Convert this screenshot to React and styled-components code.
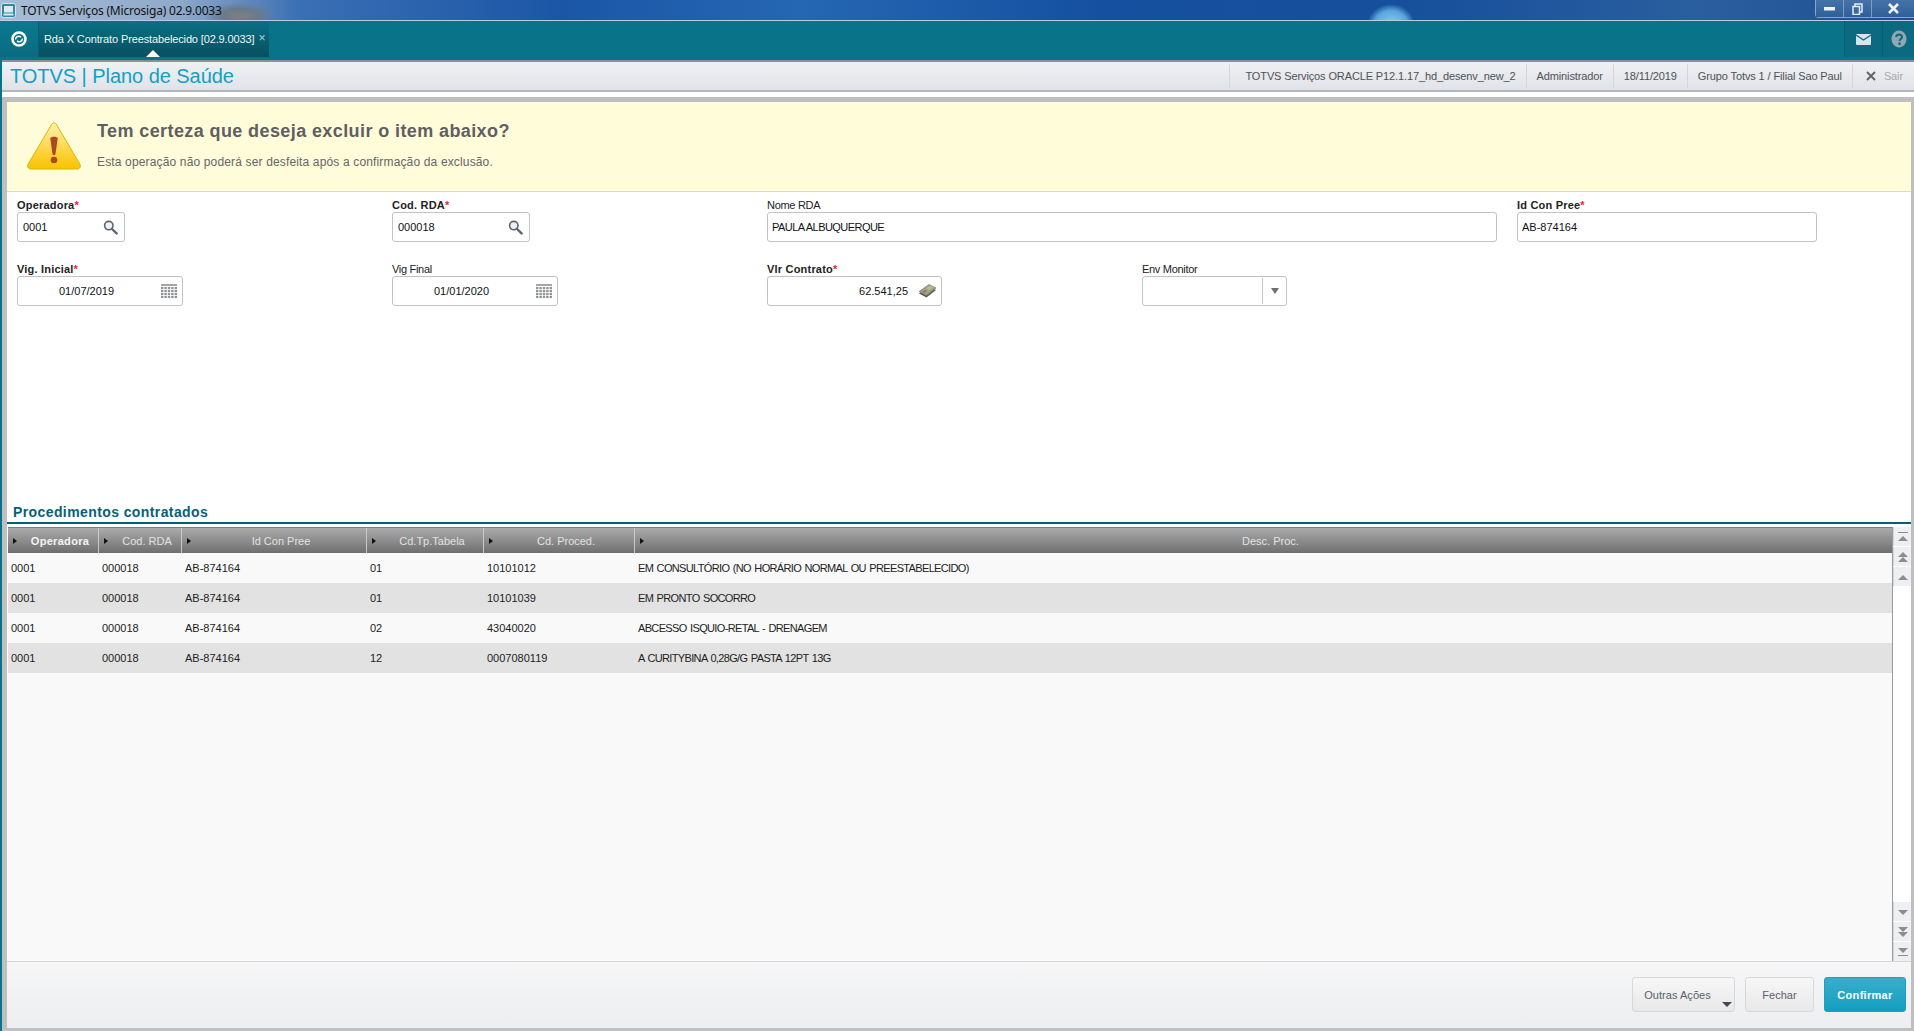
import React from "react";
import styled, { createGlobalStyle } from "styled-components";

const GlobalStyles = createGlobalStyle`
html, body {
  margin: 0;
  padding: 0;
  background: #09738a;
}
body {
  font-family: "Liberation Sans", Arial, sans-serif;
  font-size: 11px;
  color: #222;
}
`;

const Page = styled.div`
  width: 1914px;
  height: 1031px;
  display: flex;
  flex-direction: column;
  overflow: hidden;
`;

// janela do windows
const TitleBar = styled.div`
  height: 20px;
  flex: none;
  display: flex;
  align-items: center;
  border-bottom: 1px solid #b9cde0;
  background:
    radial-gradient(ellipse 24px 22px at 1391px 26px, #8fd0f2 0%, #5aa5dc 70%, transparent 100%),
    radial-gradient(ellipse 36px 14px at 240px 16px, #7d7f80 0%, #6b7a8c 50%, transparent 100%),
    linear-gradient(90deg, #a8bdd6 0, #8fa9c9 180px, #3a6fb4 300px, #1b56a6 560px, #2567b3 800px, #1550a0 1100px, #164f9b 1400px, #2a5f9f 1700px, #1d4f8c 100%);
`;

const AppIcon = styled.svg`
  width: 15px;
  height: 15px;
  margin-left: 1px;
  flex: none;
`;

const WindowTitle = styled.span`
  margin-left: 5px;
  font-family: "Noto Sans", sans-serif;
  font-size: 12px;
  letter-spacing: -0.2px;
  color: #111;
  white-space: nowrap;
`;

const WindowButtons = styled.div`
  margin-left: auto;
  height: 18px;
  align-self: flex-start;
  display: flex;
  width: 99px;
  border: 1px solid #8aa5c4;
  border-top: none;
  border-right: none;
  border-radius: 0 0 0 4px;
  box-sizing: border-box;
`;

const WindowButton = styled.div`
  flex: ${(p) => (p.$wide ? "1" : "none")};
  width: 27px;
  display: flex;
  align-items: center;
  justify-content: center;
  border-right: 1px solid #7f9abb;
  background: linear-gradient(#4573a8, #2f5f99);
  svg { display: block; }
  &:last-child { border-right: none; }
`;

const TabBar = styled.div`
  height: 36px;
  flex: none;
  display: flex;
  background: #09738a;
  border-bottom: 3px solid #09738a;
`;

const LogoCell = styled.div`
  width: 38px;
  display: flex;
  align-items: center;
  justify-content: center;
  border-right: 1px solid #0b5d70;
  background: linear-gradient(#0a7a90, #0a6a80);
`;

const Tab = styled.div`
  position: relative;
  width: 230px;
  display: flex;
  align-items: center;
  padding-left: 5px;
  box-sizing: border-box;
  background: linear-gradient(#0a7085, #07505f);
  color: #f0f5f6;
  font-size: 11px;
  letter-spacing: -0.13px;
  white-space: nowrap;
  &::after {
    content: "";
    position: absolute;
    left: 107px;
    bottom: 0;
    border-left: 7px solid transparent;
    border-right: 7px solid transparent;
    border-bottom: 7px solid #fff;
  }
`;

const TabClose = styled.span`
  margin-left: 4px;
  margin-top: -3px;
  color: #b9d2d8;
  font-size: 12px;
`;

const TabBarRight = styled.div`
  margin-left: auto;
  display: flex;
`;

const TabIconCell = styled.div`
  width: ${(p) => p.$w}px;
  display: flex;
  align-items: center;
  justify-content: center;
  background: #0b6a80;
  border-left: 1px solid #0a5e72;
  box-sizing: border-box;
`;

const Header = styled.div`
  height: 32px;
  flex: none;
  margin-left: 2px;
  display: flex;
  align-items: center;
  box-sizing: border-box;
  border-top: 2px solid #8c8f93;
  border-bottom: 2px solid #b3b6ba;
  background: linear-gradient(#f0f1f4, #e0e3e8);
`;

const Brand = styled.div`
  margin-left: 8px;
  font-size: 20px;
  letter-spacing: -0.05px;
  color: #12a0c4;
  white-space: nowrap;
`;

const HeaderInfo = styled.div`
  margin-left: auto;
  height: 100%;
  display: flex;
  align-items: center;
`;

const InfoItem = styled.div`
  height: 24px;
  display: flex;
  align-items: center;
  box-sizing: border-box;
  padding: 0 10px 0 ${(p) => p.$pad || 10}px;
  border-left: 1px solid #d3d6da;
  font-size: 11px;
  letter-spacing: -0.12px;
  color: #4d5257;
  white-space: nowrap;
`;

const LogoutItem = styled(InfoItem)`
  gap: 8px;
  padding: 0 11px 0 13px;
  color: #a8abaf;
`;

const Main = styled.div`
  flex: 1;
  min-height: 0;
  margin-left: 2px;
  padding-top: 5px;
  background: #fff;
  display: flex;
`;

const Panel = styled.div`
  flex: 1;
  min-width: 0;
  display: flex;
  flex-direction: column;
  box-sizing: border-box;
  border: solid #bfbfbf;
  border-width: 5px 3px 3px 5px;
  background: #fff;
`;

const Alert = styled.div`
  height: 90px;
  flex: none;
  box-sizing: border-box;
  display: flex;
  align-items: flex-start;
  background: #fffcd9;
  border-bottom: 1px solid #d9d9d0;
  padding: 20px 0 0 20px;
`;

const AlertText = styled.div`
  margin-left: 16px;
`;

const AlertTitle = styled.div`
  font-size: 18px;
  line-height: 20px;
  margin-top: -1px;
  font-weight: bold;
  letter-spacing: 0.4px;
  color: #5f5f63;
  white-space: nowrap;
`;

const AlertSub = styled.div`
  margin-top: 14px;
  font-size: 12px;
  line-height: 14px;
  color: #66666a;
  letter-spacing: 0.15px;
  white-space: nowrap;
`;

const Form = styled.div`
  height: 314px;
  flex: none;
  box-sizing: border-box;
  padding: 6px 0 0 10px;
  display: grid;
  grid-template-columns: repeat(5, 355px);
  grid-auto-rows: 44px;
  column-gap: 20px;
  row-gap: 20px;
  align-content: start;
`;

const Field = styled.div`
  grid-column: ${(p) => p.$col} / span ${(p) => p.$span || 1};
  grid-row: ${(p) => p.$row};
  width: ${(p) => p.$w}px;
`;

const Label = styled.div`
  height: 14px;
  line-height: 14px;
  font-size: 11px;
  white-space: nowrap;
  color: #222;
  font-weight: ${(p) => (p.$req ? "bold" : "normal")};
  letter-spacing: ${(p) => (p.$req ? "0.2px" : "-0.3px")};
  i {
    font-style: normal;
    color: #e8262b;
  }
`;

const InputBox = styled.div`
  height: 30px;
  box-sizing: border-box;
  display: flex;
  align-items: center;
  border: 1px solid #c3c3c3;
  border-radius: 3px;
  background: #fff;
  padding: 0 ${(p) => p.$pr || 0}px 0 ${(p) => p.$pl || 5}px;
  font-size: 11px;
  color: #111;
  white-space: nowrap;
`;

const InputValue = styled.span`
  flex: 1;
  text-align: ${(p) => p.$align || "left"};
  padding-right: ${(p) => p.$pr || 0}px;
  letter-spacing: ${(p) => (p.$caps ? "-0.55px" : "0")};
`;

const SelectArrow = styled.div`
  width: 23px;
  height: 26px;
  flex: none;
  margin-left: auto;
  border-left: 1px solid #c3c3c3;
  display: flex;
  align-items: center;
  justify-content: center;
  &::after {
    content: "";
    border-left: 4px solid transparent;
    border-right: 4px solid transparent;
    border-top: 6px solid #6b6f75;
  }
`;

const SectionTitle = styled.div`
  height: 18px;
  flex: none;
  box-sizing: border-box;
  padding-left: 6px;
  font-size: 14px;
  line-height: 13px;
  font-weight: bold;
  letter-spacing: 0.4px;
  color: #075f78;
  border-bottom: 2px solid #075f73;
`;

const GridArea = styled.div`
  flex: 1;
  min-height: 0;
  display: flex;
  padding-top: 3px;
`;

const Table = styled.div`
  flex: 1;
  min-width: 0;
  margin-left: 1px;
  display: flex;
  flex-direction: column;
  background: #f9f9f9;
  border-right: 1px solid #9a9a9a;
`;

const columns = "91px 83px 185px 117px 151px 1fr";

const HeadRow = styled.div`
  height: 26px;
  flex: none;
  display: grid;
  grid-template-columns: ${columns};
  background: linear-gradient(#ababab, #6f6f6f);
  box-sizing: border-box;
  border-top: 1px solid #7c7c7c;
`;

const HeadCell = styled.div`
  position: relative;
  display: flex;
  align-items: center;
  justify-content: center;
  padding-left: 14px;
  font-size: 11px;
  font-weight: ${(p) => (p.$bold ? "bold" : "normal")};
  letter-spacing: ${(p) => (p.$bold ? "0.3px" : "0")};
  color: ${(p) => (p.$bold ? "#f4f4f4" : "#e2e2e2")};
  border-right: 1px solid #c9c9c9;
  &:last-child { border-right: none; }
  &::before {
    content: "";
    position: absolute;
    left: 5px;
    top: 10px;
    border-top: 3px solid transparent;
    border-bottom: 3px solid transparent;
    border-left: 4px solid #111;
  }
`;

const Row = styled.div`
  height: 30px;
  flex: none;
  display: grid;
  grid-template-columns: ${columns};
  align-items: center;
  background: ${(p) => (p.$alt ? "#e2e2e2" : "#f9f9f9")};
`;

const Cell = styled.div`
  padding-left: 3px;
  font-size: 11px;
  color: #222;
  white-space: nowrap;
  letter-spacing: ${(p) => (p.$caps ? "-0.65px" : "0")};
  word-spacing: ${(p) => (p.$caps ? "1px" : "0")};
`;

const ScrollBar = styled.div`
  width: 18px;
  flex: none;
  display: flex;
  flex-direction: column;
  justify-content: space-between;
  background: #fff;
`;

const ScrollGroup = styled.div`
  display: flex;
  flex-direction: column;
  gap: 1px;
`;

const ScrollButton = styled.div`
  height: 19px;
  display: flex;
  align-items: center;
  justify-content: center;
  background: #eeeff1;
  border-left: 1px solid #d8d8d8;
  svg { display: block; }
`;

const Footer = styled.div`
  height: 67px;
  flex: none;
  box-sizing: border-box;
  display: flex;
  align-items: flex-start;
  justify-content: flex-end;
  gap: 10px;
  padding: 15px 5px 0 0;
  border-top: 1px solid #d6d6d6;
  background: linear-gradient(#f6f6f7, #eceef0);
`;

const Button = styled.div`
  position: relative;
  width: ${(p) => p.$w}px;
  height: 35px;
  box-sizing: border-box;
  display: flex;
  align-items: center;
  justify-content: center;
  padding-right: ${(p) => p.$pr || 0}px;
  border-radius: 3px;
  font-size: 11px;
  letter-spacing: ${(p) => (p.$primary ? "0.3px" : "0.05px")};
  color: ${(p) => (p.$primary ? "#fff" : "#59606a")};
  font-weight: ${(p) => (p.$primary ? "bold" : "normal")};
  border: 1px solid ${(p) => (p.$primary ? "#1c9fc1" : "#d8d8d8")};
  background: ${(p) =>
    p.$primary ? "linear-gradient(#3aaecb, #129ec0)" : "linear-gradient(#f7f7f8, #e8e8e9)"};
`;

const Caret = styled.span`
  position: absolute;
  right: 2px;
  bottom: 4px;
  border-left: 5px solid transparent;
  border-right: 5px solid transparent;
  border-top: 5px solid #454a52;
`;

const SearchIcon = () => (
  <svg width="15" height="15" viewBox="0 0 15 15">
    <circle cx="5.8" cy="5.6" r="4.2" fill="#eef2f6" stroke="#5c6672" strokeWidth="1.6" />
    <path d="M9 9l4.6 4.4" stroke="#5c6672" strokeWidth="2.4" strokeLinecap="round" />
  </svg>
);

const CalendarIcon = () => (
  <svg width="16" height="14" viewBox="0 0 16 14">
    <rect x="0" y="0" width="16" height="2" fill="#a4a6aa" />
    {[3, 6, 9, 12].map((y) =>
      [0, 3.4, 6.8, 10.2, 13.6].map((x) => (
        <rect key={x + "-" + y} x={x} y={y} width="2.4" height="2.2" fill="#8f9297" />
      ))
    )}
  </svg>
);

const MoneyIcon = () => (
  <svg width="19" height="16" viewBox="0 0 19 16">
    <path d="M1 10.5L11 3.500l7 3.500-9.500 7.500z" fill="#5f5a50" />
    <path d="M1 8.500L11 1.500l7 3.500-9.500 7.500z" fill="#a39d8d" stroke="#77725f" strokeWidth="0.6" />
    <path d="M8 5.500l4-3 3.500 1.700-4 3z" fill="#a8c878" />
    <path d="M4 9l3-2 2 1-3 2z" fill="#857f70" />
  </svg>
);

const WarningIcon = () => (
  <svg width="54" height="48" viewBox="0 0 54 48">
    <defs>
      <linearGradient id="warnFill" x1="0" y1="0" x2="0" y2="1">
        <stop offset="0" stopColor="#fff3b0" />
        <stop offset="0.55" stopColor="#fdd64a" />
        <stop offset="1" stopColor="#f8c400" />
      </linearGradient>
    </defs>
    <path
      d="M27 1c1.2 0 2 .7 2.700 2L52.800 42c1.300 2.500.2 5-2.800 5H4c-3 0-4.100-2.500-2.800-5L24.300 3c.7-1.300 1.500-2 2.700-2z"
      fill="url(#warnFill)"
      stroke="#e2b000"
      strokeWidth="1"
    />
    <path d="M23.300 16.500c0-2.400 7.400-2.400 7.400 0L28.500 32c-.2 1.300-2.800 1.300-3 0z" fill="#a84a24" />
    <circle cx="27" cy="38" r="3.300" fill="#a84a24" />
  </svg>
);

const Tri = ({ down, y = 0 }) => (
  <path
    d={down ? `M1 ${y}h10l-5 5z` : `M6 ${y}l5 5H1z`}
    fill="#8d8d8f"
  />
);

const ScrollIcon = ({ down, kind }) => (
  <svg width="12" height="12" viewBox="0 0 12 12">
    {kind === "end" && !down && <rect x="1" y="1" width="10" height="1" fill="#8d8d8f" />}
    {kind === "end" && <Tri down={down} y={down ? 2 : 5} />}
    {kind === "end" && down && <rect x="1" y="9" width="10" height="1" fill="#8d8d8f" />}
    {kind === "page" && <Tri down={down} y={1} />}
    {kind === "page" && <Tri down={down} y={6} />}
    {kind === "one" && <Tri down={down} y={4} />}
  </svg>
);

const rows = [
  ["01", "10101012", "EM CONSULTÓRIO (NO HORÁRIO NORMAL OU PREESTABELECIDO)"],
  ["01", "10101039", "EM PRONTO SOCORRO"],
  ["02", "43040020", "ABCESSO ISQUIO-RETAL - DRENAGEM"],
  ["12", "0007080119", "A CURITYBINA 0,28G/G PASTA 12PT 13G"],
];

function App() {
  return (
    <Page>
      <GlobalStyles />
      <TitleBar>
        <AppIcon viewBox="0 0 15 15">
          <rect x="0.5" y="0.5" width="14" height="14" rx="2" fill="#2f8aa0" stroke="#d6e6ee" />
          <rect x="3" y="3" width="9" height="6.500" fill="#dfeaf0" />
          <rect x="2.500" y="10.500" width="10" height="2" fill="#dfeaf0" />
        </AppIcon>
        <WindowTitle>TOTVS Serviços (Microsiga) 02.9.0033</WindowTitle>
        <WindowButtons>
          <WindowButton>
            <svg width="11" height="4" viewBox="0 0 11 4"><rect width="11" height="3.500" fill="#eef2f6" /></svg>
          </WindowButton>
          <WindowButton>
            <svg width="11" height="12" viewBox="0 0 11 12">
              <rect x="3" y="1" width="7" height="8" fill="none" stroke="#e6ebf2" strokeWidth="1.500" />
              <rect x="1" y="3.500" width="6.500" height="8" fill="#3a6aa2" stroke="#e6ebf2" strokeWidth="1.500" />
            </svg>
          </WindowButton>
          <WindowButton $wide>
            <svg width="13" height="11" viewBox="0 0 13 11">
              <path d="M2 1l9 9M11 1l-9 9" stroke="#eef2f6" strokeWidth="2.600" />
            </svg>
          </WindowButton>
        </WindowButtons>
      </TitleBar>

      <TabBar>
        <LogoCell>
          <svg width="18" height="18" viewBox="0 0 18 18">
            <circle cx="9" cy="9" r="6.500" fill="#0a7088" stroke="#fff" strokeWidth="2.600" />
            <path d="M5.500 9.500C5.500 6.500 9 5.500 11 7M12.500 8.500C12.500 11.500 9 12.500 7 11" fill="none" stroke="#fff" strokeWidth="1.600" />
          </svg>
        </LogoCell>
        <Tab>
          Rda X Contrato Preestabelecido [02.9.0033]
          <TabClose>×</TabClose>
        </Tab>
        <TabBarRight>
          <TabIconCell $w={38}>
            <svg width="15" height="11" viewBox="0 0 15 11">
              <rect width="15" height="11" rx="1" fill="#d7e6ea" />
              <path d="M0 1l7.500 5L15 1" fill="none" stroke="#0b6a80" strokeWidth="1.300" />
            </svg>
          </TabIconCell>
          <TabIconCell $w={32}>
            <svg width="16" height="18" viewBox="0 0 16 18">
              <ellipse cx="8" cy="9" rx="7.500" ry="8.500" fill="#8fa9b0" />
              <path d="M5.200 7c0-3.500 5.800-3.500 5.800 0 0 2-2.400 2-2.400 4" fill="none" stroke="#0b6a80" strokeWidth="2" />
              <rect x="7.300" y="12.500" width="2.400" height="2.400" fill="#0b6a80" />
            </svg>
          </TabIconCell>
        </TabBarRight>
      </TabBar>

      <Header>
        <Brand>TOTVS | Plano de Saúde</Brand>
        <HeaderInfo>
          <InfoItem $pad={15}>TOTVS Serviços ORACLE P12.1.17_hd_desenv_new_2</InfoItem>
          <InfoItem>Administrador</InfoItem>
          <InfoItem>18/11/2019</InfoItem>
          <InfoItem>Grupo Totvs 1 / Filial Sao Paul</InfoItem>
          <LogoutItem>
            <svg width="10" height="10" viewBox="0 0 10 10">
              <path d="M1 1l8 8M9 1l-8 8" stroke="#5d6268" strokeWidth="1.800" />
            </svg>
            Sair
          </LogoutItem>
        </HeaderInfo>
      </Header>

      <Main>
        <Panel>
          <Alert>
            <WarningIcon />
            <AlertText>
              <AlertTitle>Tem certeza que deseja excluir o item abaixo?</AlertTitle>
              <AlertSub>Esta operação não poderá ser desfeita após a confirmação da exclusão.</AlertSub>
            </AlertText>
          </Alert>

          <Form>
            <Field $col={1} $row={1} $w={108}>
              <Label $req>Operadora<i>*</i></Label>
              <InputBox $pr={6}>
                <InputValue>0001</InputValue>
                <SearchIcon />
              </InputBox>
            </Field>
            <Field $col={2} $row={1} $w={138}>
              <Label $req>Cod. RDA<i>*</i></Label>
              <InputBox $pr={6}>
                <InputValue>000018</InputValue>
                <SearchIcon />
              </InputBox>
            </Field>
            <Field $col={3} $span={2} $row={1} $w={730}>
              <Label>Nome RDA</Label>
              <InputBox $pl={4}>
                <InputValue $caps>PAULA ALBUQUERQUE</InputValue>
              </InputBox>
            </Field>
            <Field $col={5} $row={1} $w={300}>
              <Label $req>Id Con Pree<i>*</i></Label>
              <InputBox $pl={4}>
                <InputValue>AB-874164</InputValue>
              </InputBox>
            </Field>

            <Field $col={1} $row={2} $w={166}>
              <Label $req>Vig. Inicial<i>*</i></Label>
              <InputBox $pr={5}>
                <InputValue $align="center" $pr={11}>01/07/2019</InputValue>
                <CalendarIcon />
              </InputBox>
            </Field>
            <Field $col={2} $row={2} $w={166}>
              <Label>Vig Final</Label>
              <InputBox $pr={5}>
                <InputValue $align="center" $pr={11}>01/01/2020</InputValue>
                <CalendarIcon />
              </InputBox>
            </Field>
            <Field $col={3} $row={2} $w={175}>
              <Label $req>Vlr Contrato<i>*</i></Label>
              <InputBox $pr={4}>
                <InputValue $align="right" $pr={10}>62.541,25</InputValue>
                <MoneyIcon />
              </InputBox>
            </Field>
            <Field $col={4} $row={2} $w={145}>
              <Label>Env Monitor</Label>
              <InputBox>
                <SelectArrow />
              </InputBox>
            </Field>
          </Form>

          <SectionTitle>Procedimentos contratados</SectionTitle>

          <GridArea>
            <Table>
              <HeadRow>
                <HeadCell $bold>Operadora</HeadCell>
                <HeadCell>Cod. RDA</HeadCell>
                <HeadCell>Id Con Pree</HeadCell>
                <HeadCell>Cd.Tp.Tabela</HeadCell>
                <HeadCell>Cd. Proced.</HeadCell>
                <HeadCell>Desc. Proc.</HeadCell>
              </HeadRow>
              {rows.map((r, i) => (
                <Row key={r[1]} $alt={i % 2 === 1}>
                  <Cell>0001</Cell>
                  <Cell>000018</Cell>
                  <Cell>AB-874164</Cell>
                  <Cell>{r[0]}</Cell>
                  <Cell>{r[1]}</Cell>
                  <Cell $caps>{r[2]}</Cell>
                </Row>
              ))}
            </Table>
            <ScrollBar>
              <ScrollGroup>
                <ScrollButton><ScrollIcon kind="end" /></ScrollButton>
                <ScrollButton><ScrollIcon kind="page" /></ScrollButton>
                <ScrollButton><ScrollIcon kind="one" /></ScrollButton>
              </ScrollGroup>
              <ScrollGroup>
                <ScrollButton><ScrollIcon kind="one" down /></ScrollButton>
                <ScrollButton><ScrollIcon kind="page" down /></ScrollButton>
                <ScrollButton><ScrollIcon kind="end" down /></ScrollButton>
              </ScrollGroup>
            </ScrollBar>
          </GridArea>

          <Footer>
            <Button $w={103} $pr={12}>Outras Ações<Caret /></Button>
            <Button $w={69}>Fechar</Button>
            <Button $w={82} $primary>Confirmar</Button>
          </Footer>
        </Panel>
      </Main>
    </Page>
  );
}

export default App;
